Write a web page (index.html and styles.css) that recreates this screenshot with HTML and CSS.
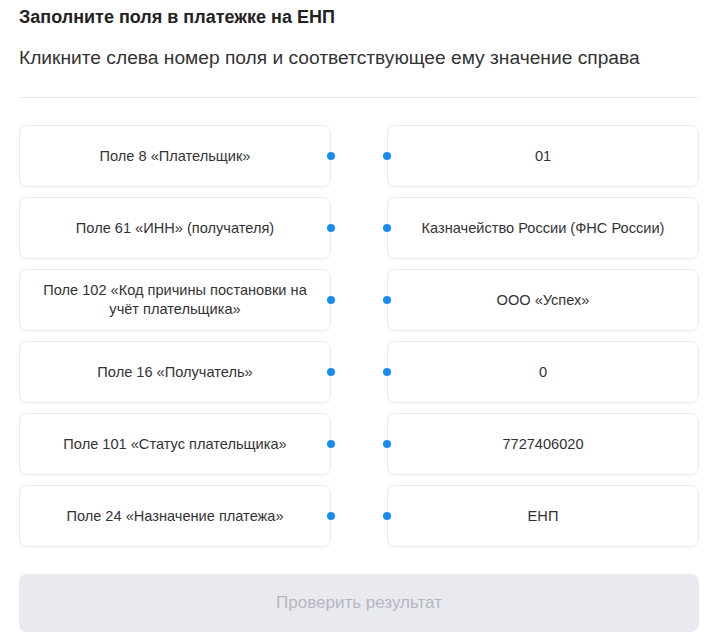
FILE: index.html
```html
<!DOCTYPE html>
<html lang="ru">
<head>
<meta charset="utf-8">
<link rel="stylesheet" href="styles.css">
</head>
<body>
<div class="page">
  <h1 class="title">Заполните поля в платежке на ЕНП</h1>
  <p class="subtitle">Кликните слева номер поля и соответствующее ему значение справа</p>
  <div class="divider"></div>
  <div class="match">
    <div class="card left"><span>Поле 8 «Плательщик»</span><i class="dot"></i></div>
    <div class="card right"><i class="dot"></i><span>01</span></div>
    <div class="card left"><span>Поле 61 «ИНН» (получателя)</span><i class="dot"></i></div>
    <div class="card right"><i class="dot"></i><span>Казначейство России (ФНС России)</span></div>
    <div class="card left"><span>Поле 102 «Код причины постановки на учёт плательщика»</span><i class="dot"></i></div>
    <div class="card right"><i class="dot"></i><span>ООО «Успех»</span></div>
    <div class="card left"><span>Поле 16 «Получатель»</span><i class="dot"></i></div>
    <div class="card right"><i class="dot"></i><span>0</span></div>
    <div class="card left"><span>Поле 101 «Статус плательщика»</span><i class="dot"></i></div>
    <div class="card right"><i class="dot"></i><span>7727406020</span></div>
    <div class="card left"><span>Поле 24 «Назначение платежа»</span><i class="dot"></i></div>
    <div class="card right"><i class="dot"></i><span>ЕНП</span></div>
  </div>
  <button class="check" type="button">Проверить результат</button>
</div>
</body>
</html>
```

FILE: styles.css
```css
html, body {
  margin: 0;
  padding: 0;
  background: #ffffff;
}

.page {
  padding: 6px 27px 0 19px;
  font-family: "Liberation Sans", Arial, sans-serif;
  color: #333333;
}

.title {
  margin: 0;
  font-size: 18px;
  line-height: 22px;
  font-weight: 700;
  color: #222222;
}

.subtitle {
  margin: 19px 0 0;
  font-size: 19.2px;
  line-height: 22px;
  font-weight: 400;
  color: #333333;
}

.divider {
  height: 1px;
  background: #ececec;
  margin-top: 28px;
}

.match {
  display: grid;
  grid-template-columns: 312px 312px;
  column-gap: 56px;
  row-gap: 10px;
  margin-top: 27px;
}

.card {
  position: relative;
  height: 62px;
  box-sizing: border-box;
  border: 1px solid #ececec;
  border-radius: 8px;
  box-shadow: 0 1px 3px rgba(0, 0, 0, 0.04);
  background: #ffffff;
  display: flex;
  align-items: center;
  justify-content: center;
  text-align: center;
  font-size: 14.6px;
  line-height: 19px;
  color: #333333;
  padding: 0 14px;
}

.dot {
  position: absolute;
  top: 50%;
  width: 8px;
  height: 8px;
  margin-top: -4px;
  border-radius: 50%;
  background: #168cf2;
}

.card.left .dot {
  right: -5px;
}

.card.right .dot {
  left: -5px;
}

.check {
  display: block;
  width: 680px;
  height: 58px;
  margin-top: 27px;
  border: none;
  border-radius: 8px;
  background: #e9eaef;
  color: #b4b6bf;
  font-family: "Liberation Sans", Arial, sans-serif;
  font-size: 17px;
}
```
